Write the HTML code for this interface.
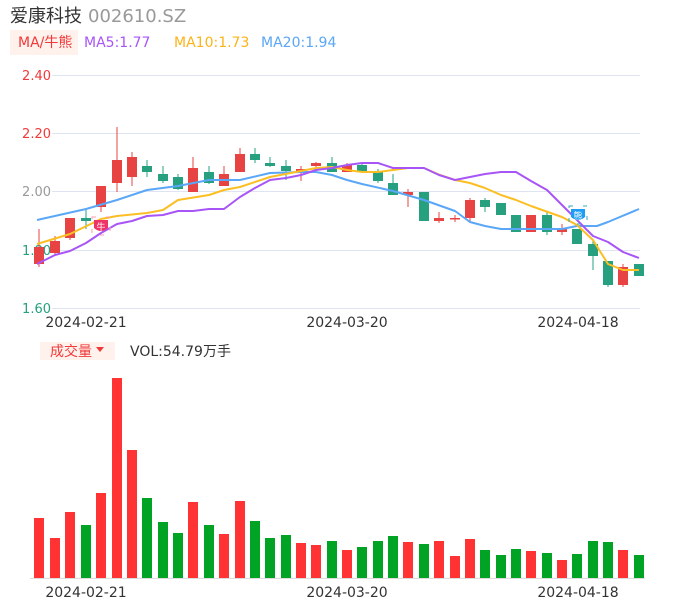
<!DOCTYPE html>
<html><head><meta charset="utf-8"><style>
html,body{margin:0;padding:0;background:#fff;width:686px;height:606px;overflow:hidden;font-family:"Liberation Sans","Noto Sans CJK SC",sans-serif}
svg{position:absolute;left:0;top:0}
</style></head><body>
<svg id="s" width="686" height="606" xmlns="http://www.w3.org/2000/svg" font-family="DejaVu Sans,'Liberation Sans','Noto Sans CJK SC',sans-serif">
<text x="10" y="22" font-size="18" fill="#333" font-family="'Noto Sans CJK SC',sans-serif">爱康科技</text>
<text x="88" y="22" font-size="18" fill="#999">002610.SZ</text>
<rect x="10" y="30" width="68" height="25" fill="#fff1ec"/>
<text x="18" y="47" font-size="14" fill="#f03a3a">MA/牛熊</text>
<text x="84" y="47" font-size="14" fill="#a855f7">MA5:1.77</text>
<text x="174" y="47" font-size="14" fill="#fbb31a">MA10:1.73</text>
<text x="261" y="47" font-size="14" fill="#5aa7f7">MA20:1.94</text>
<g stroke="#dfe4f2" stroke-width="1">
<line x1="52" y1="75.5" x2="640" y2="75.5"/><line x1="52" y1="133.5" x2="640" y2="133.5"/><line x1="52" y1="191.5" x2="640" y2="191.5"/><line x1="52" y1="250.5" x2="640" y2="250.5"/><line x1="52" y1="308.5" x2="640" y2="308.5"/>
</g>
<g font-size="13" text-anchor="end">
<text x="51" y="80" fill="#f03a3a">2.40</text><text x="51" y="138" fill="#f03a3a">2.20</text><text x="51" y="196" fill="#999">2.00</text><text x="51" y="255" fill="#26a07f">1.80</text><text x="51" y="313" fill="#26a07f">1.60</text>
</g>
<g font-size="14" fill="#333" text-anchor="middle">
<text x="86" y="327">2024-02-21</text><text x="347" y="327">2024-03-20</text><text x="578" y="327">2024-04-18</text>
<text x="86" y="597">2024-02-21</text><text x="347" y="597">2024-03-20</text><text x="578" y="597">2024-04-18</text>
</g>
<rect x="40" y="342" width="75" height="18" fill="#fff1ec"/>
<text x="50" y="356" font-size="14" fill="#f03a3a" font-family="'Noto Sans CJK SC',sans-serif">成交量</text>
<path d="M96 347 L104 347 L100 352 Z" fill="#f03a3a"/>
<text x="130" y="356" font-size="14" fill="#333">VOL:54.79万手</text>
<line x1="30" y1="578.5" x2="645" y2="578.5" stroke="#ddd"/>
<g id="c"></g>
</svg>
<script>
var ns="http://www.w3.org/2000/svg",g=document.getElementById('c');
function el(t,a){var e=document.createElementNS(ns,t);for(var k in a)e.setAttribute(k,a[k]);g.appendChild(e);return e;}
var xs=[39,55,70,86,101,117,132,147,163,178,193,209,224,240,255,270,286,301,316,332,347,362,378,393,408,424,439,455,470,485,501,516,531,547,562,577,593,608,623,639];
// [color, bodyTop, bodyBot, wickTop, wickBot]
var C=[["r",247,264,229,267],["r",241,253,236,254],["r",218,238,218,240],["g",218,221,209,229],["r",186,207,186,212],["r",160,183,127,192],["r",157,177,152,186],["g",166,172,160,177],["g",174,181,166,183],["g",177,189,174,190],["r",168,192,157,192],["g",172,183,166,184],["r",174,186,166,186],["r",154,172,148,172],["g",154,160,148,163],["g",163,166,157,167],["g",166,171,160,180],["r",169,172,166,181],["r",163,166,162,167],["g",163,172,157,172],["r",165,172,163,172],["g",165,172,163,172],["g",172,181,169,183],["g",183,195,174,195],["r",192,195,189,207],["g",192,221,192,221],["r",218,221,212,223],["r",218,219.5,215,222],["r",200,218,198,221],["g",200,207,198,212],["g",203,215,203,215],["g",215,232,215,232],["r",215,232,215,232],["g",215,232,212,235],["r",229,232,224,235],["g",229,244,229,244],["g",244,256,239,270],["g",261,285,261,287],["r",267,285,264,287],["g",264,276,264,276]];
var col={r:"#e84343",g:"#26a07f"};
C.forEach(function(c,i){var x=xs[i];el('line',{x1:x,x2:x,y1:c[3],y2:c[4],stroke:col[c[0]],'stroke-width':1});el('rect',{x:x-5,y:c[1],width:10,height:Math.max(1.5,c[2]-c[1]),fill:col[c[0]]});});
function line(pts,color){el('polyline',{points:pts,fill:'none',stroke:color,'stroke-width':2,'stroke-linejoin':'round'});}
line("37,220 86,209 117,200 147,190 178,186 209,180 240,180 270,173 301,172 316,172 332,175 347,180 362,184 393,191 424,200 455,211 470,222 485,226 501,229 531,229 562,229 577,226 597,226 608,222 639,209","#5aa7f7");
line("37,244 70,234 101,219 117,216 147,213 163,210 178,200 209,195 224,190 240,187 270,177 301,171 316,168 332,167 347,170 362,172 378,172 408,168 424,168 440,175 455,180 470,183 485,188 501,195 516,200 531,206 562,217 577,225 593,240 608,264 623,270 639,270","#fbbf24");
line("37,264 55,255 70,251 86,243 101,233 117,224 132,221 147,216 163,215 178,211 193,211 209,209 224,209 240,197 255,188 270,180 286,178 301,175 316,170 332,168 347,165 362,163 378,163 393,168 424,168 439,175 455,180 470,177 485,174 501,172 516,172 531,181 547,190 562,205 577,220 593,236 608,242 623,252 639,258","#a855f7");
// badges
el('rect',{x:92,y:217,width:18,height:18,fill:'none',stroke:'#f9a',"stroke-dasharray":"4 10"});
el('path',{d:"M94 220 L108 220 L108 228 Q101 234 94 228 Z",fill:'#ee3366'});
var t=el('text',{x:101,y:230,'font-size':9,fill:'#fff','text-anchor':'middle'});t.textContent='牛';
el('rect',{x:569,y:206,width:18,height:18,fill:'none',stroke:'#3ab',"stroke-dasharray":"4 10"});
el('path',{d:"M571 209 L585 209 L585 217 Q578 223 571 217 Z",fill:'#1e9df5'});
t=el('text',{x:578,y:219,'font-size':9,fill:'#fff','text-anchor':'middle'});t.textContent='熊';
var V=[["r",518],["r",538],["r",512],["g",525],["r",493],["r",378],["r",450],["g",498],["g",522],["g",533],["r",502],["g",525],["r",534],["r",501],["g",521],["g",538],["g",535],["r",543],["r",545],["g",541],["r",550],["g",547],["g",541],["g",536],["r",542],["g",544],["r",541],["r",556],["r",539],["g",550],["g",555],["g",549],["r",551],["g",553],["r",560],["g",554],["g",541],["g",542],["r",550],["g",555]];
V.forEach(function(v,i){el('rect',{x:xs[i]-5,y:v[1],width:10,height:578-v[1],fill:v[0]=='r'?'#ff3333':'#00a323'});});
</script>
</body></html>
